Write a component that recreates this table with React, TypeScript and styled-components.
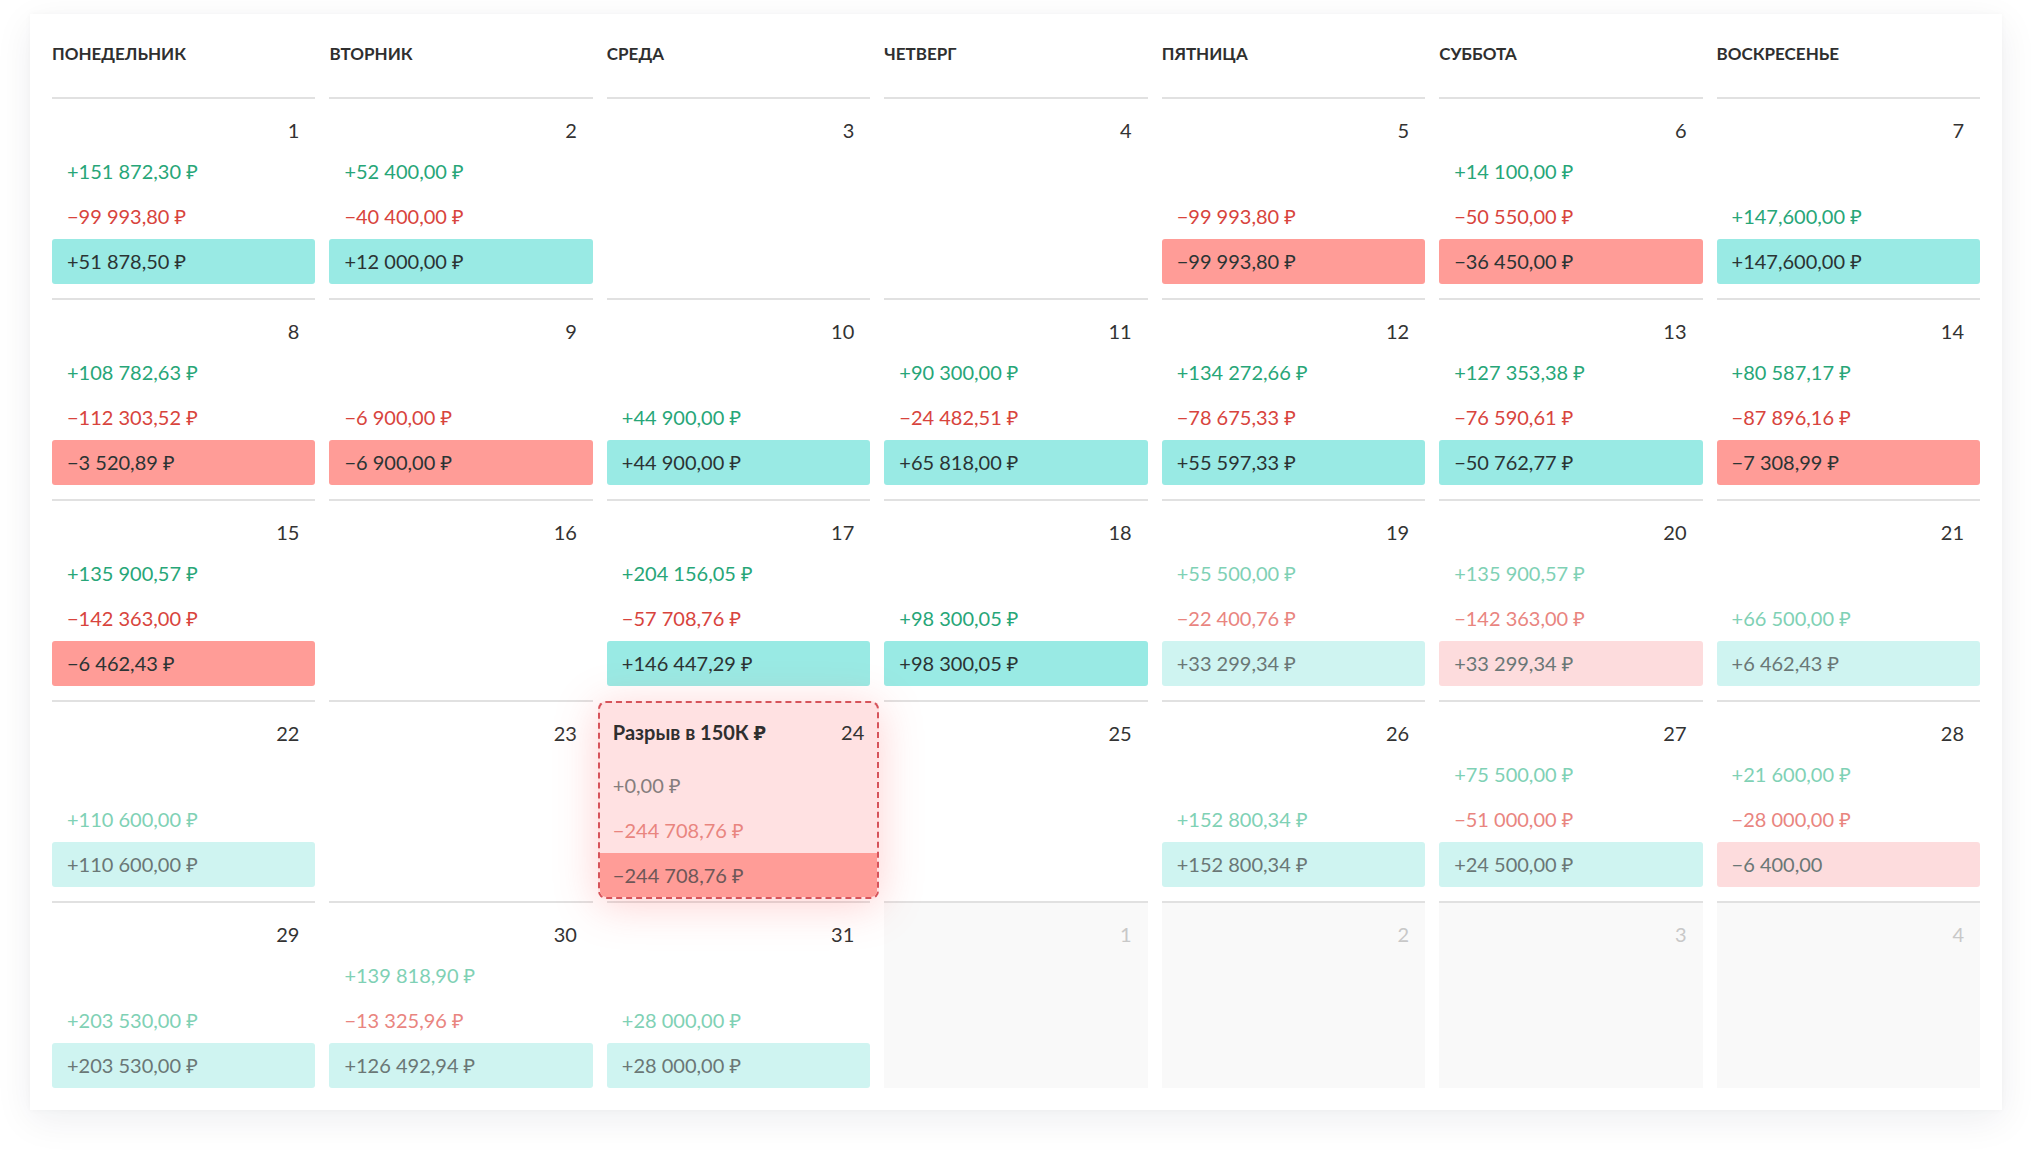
import React from 'react'
import styled, { createGlobalStyle, css } from 'styled-components'

type Tone = 'pos' | 'neg'

type Day = {
	d: number
	inc?: string
	exp?: string
	bal?: string
	tone?: Tone
	faded?: boolean
	other?: boolean
	gap?: string
}

const weekDays = ['Понедельник', 'Вторник', 'Среда', 'Четверг', 'Пятница', 'Суббота', 'Воскресенье']

const days: Day[] = [
	{ d: 1, inc: '+151 872,30 ₽', exp: '−99 993,80 ₽', bal: '+51 878,50 ₽', tone: 'pos' },
	{ d: 2, inc: '+52 400,00 ₽', exp: '−40 400,00 ₽', bal: '+12 000,00 ₽', tone: 'pos' },
	{ d: 3 },
	{ d: 4 },
	{ d: 5, exp: '−99 993,80 ₽', bal: '−99 993,80 ₽', tone: 'neg' },
	{ d: 6, inc: '+14 100,00 ₽', exp: '−50 550,00 ₽', bal: '−36 450,00 ₽', tone: 'neg' },
	{ d: 7, inc: '+147,600,00 ₽', bal: '+147,600,00 ₽', tone: 'pos' },

	{ d: 8, inc: '+108 782,63 ₽', exp: '−112 303,52 ₽', bal: '−3 520,89 ₽', tone: 'neg' },
	{ d: 9, exp: '−6 900,00 ₽', bal: '−6 900,00 ₽', tone: 'neg' },
	{ d: 10, inc: '+44 900,00 ₽', bal: '+44 900,00 ₽', tone: 'pos' },
	{ d: 11, inc: '+90 300,00 ₽', exp: '−24 482,51 ₽', bal: '+65 818,00 ₽', tone: 'pos' },
	{ d: 12, inc: '+134 272,66 ₽', exp: '−78 675,33 ₽', bal: '+55 597,33 ₽', tone: 'pos' },
	{ d: 13, inc: '+127 353,38 ₽', exp: '−76 590,61 ₽', bal: '−50 762,77 ₽', tone: 'pos' },
	{ d: 14, inc: '+80 587,17 ₽', exp: '−87 896,16 ₽', bal: '−7 308,99 ₽', tone: 'neg' },

	{ d: 15, inc: '+135 900,57 ₽', exp: '−142 363,00 ₽', bal: '−6 462,43 ₽', tone: 'neg' },
	{ d: 16 },
	{ d: 17, inc: '+204 156,05 ₽', exp: '−57 708,76 ₽', bal: '+146 447,29 ₽', tone: 'pos' },
	{ d: 18, inc: '+98 300,05 ₽', bal: '+98 300,05 ₽', tone: 'pos' },
	{ d: 19, inc: '+55 500,00 ₽', exp: '−22 400,76 ₽', bal: '+33 299,34 ₽', tone: 'pos', faded: true },
	{ d: 20, inc: '+135 900,57 ₽', exp: '−142 363,00 ₽', bal: '+33 299,34 ₽', tone: 'neg', faded: true },
	{ d: 21, inc: '+66 500,00 ₽', bal: '+6 462,43 ₽', tone: 'pos', faded: true },

	{ d: 22, inc: '+110 600,00 ₽', bal: '+110 600,00 ₽', tone: 'pos', faded: true },
	{ d: 23 },
	{ d: 24, gap: 'Разрыв в 150К ₽', inc: '+0,00 ₽', exp: '−244 708,76 ₽', bal: '−244 708,76 ₽', tone: 'neg' },
	{ d: 25 },
	{ d: 26, inc: '+152 800,34 ₽', bal: '+152 800,34 ₽', tone: 'pos', faded: true },
	{ d: 27, inc: '+75 500,00 ₽', exp: '−51 000,00 ₽', bal: '+24 500,00 ₽', tone: 'pos', faded: true },
	{ d: 28, inc: '+21 600,00 ₽', exp: '−28 000,00 ₽', bal: '−6 400,00', tone: 'neg', faded: true },

	{ d: 29, inc: '+203 530,00 ₽', bal: '+203 530,00 ₽', tone: 'pos', faded: true },
	{ d: 30, inc: '+139 818,90 ₽', exp: '−13 325,96 ₽', bal: '+126 492,94 ₽', tone: 'pos', faded: true },
	{ d: 31, inc: '+28 000,00 ₽', bal: '+28 000,00 ₽', tone: 'pos', faded: true },
	{ d: 1, other: true },
	{ d: 2, other: true },
	{ d: 3, other: true },
	{ d: 4, other: true },
]

const DayView = ({ day }: { day: Day }) => {
	const Cell = day.gap ? GapCell : DayCell
	const gap = !!day.gap
	return (
		<Cell $other={day.other}>
			<TopRow $gap={gap}>
				{gap && <GapTitle>{day.gap}</GapTitle>}
				<DayNum $other={day.other}>{day.d}</DayNum>
			</TopRow>
			<Entries>
				{day.inc && (
					<Amount $kind={gap ? 'muted' : 'inc'} $faded={day.faded} $gap={gap}>
						{day.inc}
					</Amount>
				)}
				{day.exp && (
					<Amount $kind="exp" $faded={day.faded || gap} $gap={gap}>
						{day.exp}
					</Amount>
				)}
				{day.bal && (
					<Balance $tone={day.tone} $faded={day.faded} $gap={gap}>
						{day.bal}
					</Balance>
				)}
			</Entries>
		</Cell>
	)
}

export default function App() {
	return (
		<>
			<GlobalStyle />
			<Page>
				<Card>
					<Grid>
						{weekDays.map((w) => (
							<HeadCell key={w}>{w}</HeadCell>
						))}
						{days.map((day, i) => (
							<DayView key={i} day={day} />
						))}
					</Grid>
				</Card>
			</Page>
		</>
	)
}

const GlobalStyle = createGlobalStyle`
  * {
    box-sizing: border-box;
  }

  body {
    margin: 0;
    background: #ffffff;
    font-family: Lato, 'Noto Sans', 'Open Sans', sans-serif;
    color: #333333;
  }
`

const Page = styled.div`
  padding: 14px 29px 45px 30px;
`

const Card = styled.div`
  background: #ffffff;
  padding: 22px;
  box-shadow: 0 10px 36px rgba(20, 30, 50, 0.07), 0 0 6px rgba(20, 30, 50, 0.03);
`

const Grid = styled.div`
  display: grid;
  grid-template-columns: repeat(7, 1fr);
  grid-template-rows: 47px;
  grid-auto-rows: 187px;
  column-gap: 14px;
  row-gap: 14px;
`

const HeadCell = styled.div`
  font-size: 17px;
  font-weight: 700;
  line-height: 36px;
  text-transform: uppercase;
  color: #2f2f2f;
`

const DayCell = styled.div<{ $other?: boolean }>`
  display: flex;
  flex-direction: column;
  border-top: 2px solid #e1e1e1;
  padding-top: 18px;
  min-width: 0;

  ${({ $other }) =>
		$other &&
		css`
      background: #f9f9f9;
    `}
`

const GapCell = styled(DayCell)`
  position: relative;
  z-index: 1;
  margin: 1px -9px -12px;
  padding-top: 16px;
  border: 2px dashed #d6535a;
  border-radius: 8px;
  overflow: hidden;
  background: #ffe1e2;
  box-shadow: 0 6px 44px rgba(255, 90, 90, 0.28);
`

const TopRow = styled.div<{ $gap?: boolean }>`
  display: flex;
  align-items: center;
  justify-content: flex-end;
  padding: ${({ $gap }) => ($gap ? '0 13px' : '0 16px 0 15px')};
  height: 26px;
`

const GapTitle = styled.span`
  margin-right: auto;
  font-size: 20px;
  font-weight: 700;
  color: #2f2f2f;
`

const DayNum = styled.span<{ $other?: boolean }>`
  font-size: 20px;
  line-height: 26px;
  color: ${({ $other }) => ($other ? '#c8c8c8' : '#333333')};
`

const Entries = styled.div`
  flex: 1;
  display: flex;
  flex-direction: column;
  justify-content: flex-end;
`

const amountColors = {
	inc: ['#27a678', '#7fd1b5'],
	exp: ['#d8443d', '#e9857f'],
	muted: ['#857d7d', '#857d7d'],
}

const Amount = styled.div<{ $kind: 'inc' | 'exp' | 'muted'; $faded?: boolean; $gap?: boolean }>`
  height: 45px;
  line-height: 45px;
  padding-left: ${({ $gap }) => ($gap ? '13px' : '15px')};
  font-size: 20px;
  white-space: nowrap;
  color: ${({ $kind, $faded }) => amountColors[$kind][$faded ? 1 : 0]};
`

const Balance = styled.div<{ $tone?: Tone; $faded?: boolean; $gap?: boolean }>`
  height: 45px;
  line-height: 45px;
  padding-left: 15px;
  font-size: 20px;
  white-space: nowrap;
  border-radius: 3px;
  color: ${({ $faded, $gap }) => ($gap ? '#6e5757' : $faded ? '#6a7776' : '#2b3434')};
  background: ${({ $tone, $faded }) =>
		$tone === 'neg' ? ($faded ? '#fddcdd' : '#ff9c97') : $faded ? '#cff4f1' : '#99eae4'};

  ${({ $gap }) =>
		$gap &&
		css`
      border-radius: 0;
      height: 44px;
      line-height: 44px;
      padding-left: 13px;
    `}
`
